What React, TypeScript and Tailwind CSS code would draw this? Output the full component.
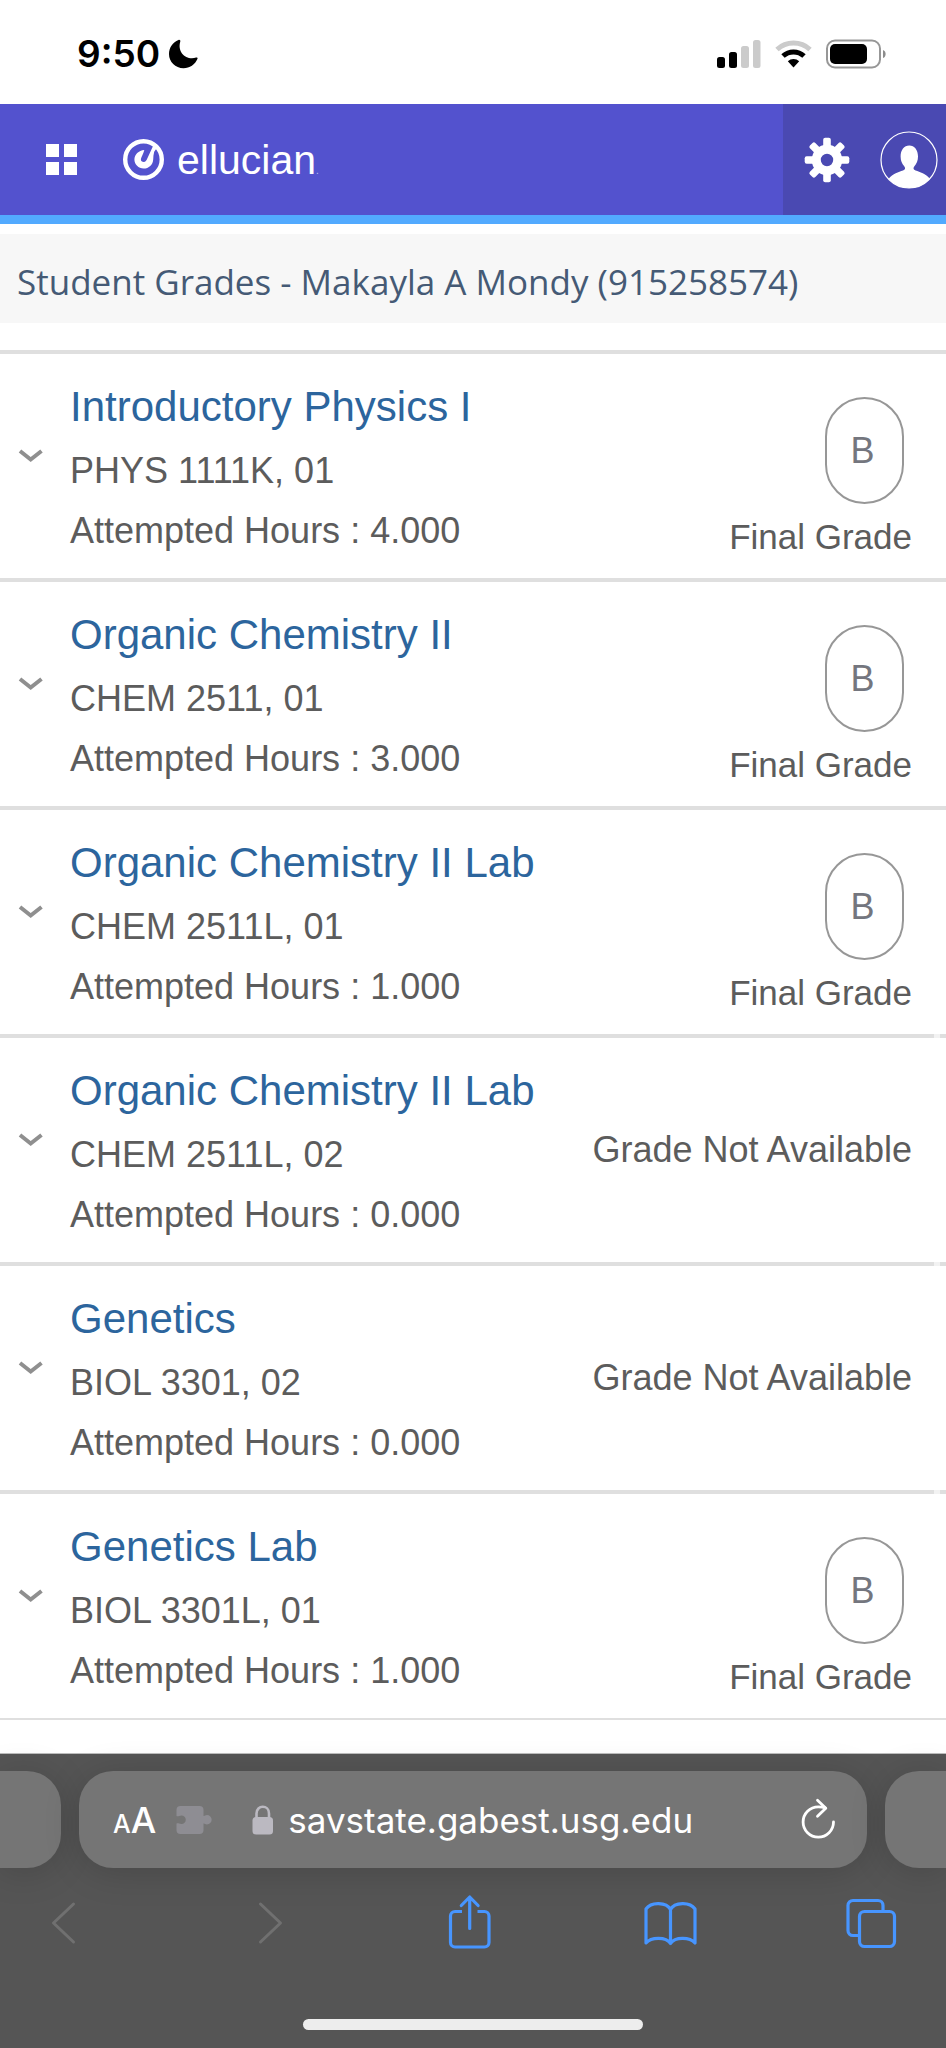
import React, { useState } from 'react';

interface Course {
    id: string;
    title: string;
    section: string;
    hours: string;
    grade?: string;
    notched?: boolean;
}

const courses: Course[] = [
    { id: 'phys-1111k-01', title: 'Introductory Physics I', section: 'PHYS 1111K, 01', hours: '4.000', grade: 'B' },
    { id: 'chem-2511-01', title: 'Organic Chemistry II', section: 'CHEM 2511, 01', hours: '3.000', grade: 'B' },
    { id: 'chem-2511l-01', title: 'Organic Chemistry II Lab', section: 'CHEM 2511L, 01', hours: '1.000', grade: 'B' },
    { id: 'chem-2511l-02', title: 'Organic Chemistry II Lab', section: 'CHEM 2511L, 02', hours: '0.000', notched: true },
    { id: 'biol-3301-02', title: 'Genetics', section: 'BIOL 3301, 02', hours: '0.000', notched: true },
    { id: 'biol-3301l-01', title: 'Genetics Lab', section: 'BIOL 3301L, 01', hours: '1.000', grade: 'B', notched: true },
];

const StatusBar: React.FC = () => (
    <div className="flex h-[104px] items-center justify-between bg-white pl-[77px] pr-[59px] pt-1">
        <div className="flex items-center gap-2">
            <span className="font-['Inter',sans-serif] text-[37px] font-semibold leading-[46px] text-black">9:50</span>
            <svg width="30" height="30" viewBox="0 0 30 30" aria-hidden="true">
                <path d="M10.500 1C4.800 3.200 1 8.600 1 15c0 8 6.400 14.200 14.500 14.200 6.200 0 11.600-3.600 14-9.400.4-1-.4-1.700-1.400-1.300C18.500 21.500 8.900 13.500 12.300 2.400c.3-.9-.6-1.900-1.800-1.400z" />
            </svg>
        </div>
        <div className="flex items-center gap-3">
            <svg width="46" height="30" viewBox="0 0 46 30" aria-hidden="true">
                <rect x="0" y="18" width="8" height="11" rx="2.500" />
                <rect x="12" y="13" width="8" height="16" rx="2.500" />
                <rect x="24" y="7" width="8" height="22" rx="2.500" fill="#cbcbcb" />
                <rect x="36" y="1" width="7.500" height="28" rx="2.500" fill="#cbcbcb" />
            </svg>
            <svg width="38" height="30" viewBox="0 0 38 30" fill="none" aria-hidden="true">
                <path d="M2 10.500a24.500 24.500 0 0 1 33 0" stroke="#cbcbcb" strokeWidth="5" />
                <path d="M8 17a15.500 15.500 0 0 1 21 0" stroke="#000" strokeWidth="5" />
                <path d="M12.800 22.200a8.500 8.500 0 0 1 11.400 0L18.500 28.500z" fill="#000" />
            </svg>
            <svg width="62" height="30" viewBox="0 0 62 30" fill="none" aria-hidden="true">
                <rect x="2" y="1.500" width="53" height="27" rx="8" stroke="#979797" strokeWidth="2" />
                <rect x="5" y="5" width="37" height="20" rx="5" fill="#000" />
                <path d="M58 11c3.500 1.200 3.500 7 0 8z" fill="#8c8c8c" />
            </svg>
        </div>
    </div>
);

const AppHeader: React.FC = () => (
    <header className="flex h-[120px] items-stretch justify-between border-b-[9px] border-[#52aaff] bg-[#5352ce]">
        <div className="flex items-center pl-[46px]">
            <button aria-label="Open menu" className="grid grid-cols-2 gap-[5px]">
                <span className="size-[13px] bg-white" />
                <span className="size-[13px] bg-white" />
                <span className="size-[13px] bg-white" />
                <span className="size-[13px] bg-white" />
            </button>
            <a href="#home" className="ml-[46px] flex items-center gap-3">
                <svg width="42" height="42" viewBox="0 0 42 42" fill="none" aria-hidden="true">
                    <circle cx="20.500" cy="20.500" r="18.300" stroke="#fff" strokeWidth="4.400" />
                    <path d="M21.300 11c-5.700.5-9.900 4.600-9.900 9.600 0 5 4.100 8.900 9.200 8.900 5.300 0 9.300-3.800 9.600-9.100.1-2.700.3-5.200 1-7.600L34.500 8l-3.300-3.500-7.500 16.300c-.6 1.300-1.500 2-2.700 2.100-1.800.1-3.300-.8-3.100-2.400.2-2.200 2.100-4.500 3.400-9.500z" fill="#fff" />
                </svg>
                <span className="text-[41px] leading-[48px] text-white">
                    ellucian<span className="text-[10px] leading-none opacity-60">.</span>
                </span>
            </a>
        </div>
        <div className="flex items-center gap-[30px] bg-[#4a49b2] pl-[21px] pr-2">
            <button aria-label="Settings">
                <svg width="46" height="46" viewBox="-23 -23 46 46" fill="none" aria-hidden="true">
                    <circle r="10.700" stroke="#fff" strokeWidth="9" />
                    <g fill="#fff">
                        {[0, 45, 90, 135, 180, 225, 270, 315].map(angle => (
                            <rect key={angle} x="-3.800" y="-22.300" width="7.600" height="11" rx="2" transform={`rotate(${angle})`} />
                        ))}
                    </g>
                </svg>
            </button>
            <button aria-label="User profile">
                <svg width="58" height="58" viewBox="0 0 58 58" fill="none" aria-hidden="true">
                    <path d="M8.500 48c4.500-5.500 10-7 14.500-8.500 2.500-.8 2.500-2.500 1.200-4.300C22 33 20.600 29.500 20.600 25.500c0-6.500 3.500-11 8.700-11s8.700 4.500 8.700 11c0 4-1.400 7.500-3.600 9.700-1.300 1.800-1.300 3.500 1.200 4.300C40 41 45.500 42.500 50 48a28.300 28.300 0 0 1-41.500 0z" fill="#fff" />
                    <circle cx="29" cy="29" r="28" stroke="#fff" strokeWidth="1.200" />
                </svg>
            </button>
        </div>
    </header>
);

const CourseRow: React.FC<{ course: Course }> = ({ course }) => {
    const [open, setOpen] = useState(false);

    return (
        <li className="relative flex items-start border-t-4 border-[#dfdfdf] pb-[17px] pt-[23px]">
            {course.notched && <span className="absolute -top-1 right-[6px] h-1 w-[6px] bg-[#f2f2f2]" />}
            <button
                onClick={() => setOpen(prev => !prev)}
                aria-expanded={open}
                aria-label={`Details for ${course.section}`}
                className="ml-4 mt-16 h-7 w-[30px] shrink-0"
            >
                <svg width="30" height="28" viewBox="0 0 30 28" fill="none" aria-hidden="true">
                    <path d="M4 10l10.700 8.500L25.500 10" stroke="#8f8f8f" strokeWidth="4" />
                </svg>
            </button>
            <div className="ml-6 flex-1 text-[36px] leading-[60px] text-[#5c5c5c]">
                <h2 className="mb-1 text-[42px]">
                    <a href={`#${course.id}`} className="block text-[#2c659d]">{course.title}</a>
                </h2>
                <p>{course.section}</p>
                <p>Attempted Hours : {course.hours}</p>
            </div>
            <div className="flex shrink-0 flex-col items-end pr-[34px] leading-[48px] text-[#5c5c5c]">
                {course.grade ? (
                    <>
                        <span className="mr-2 mt-5 flex h-[107px] w-[79px] items-center justify-center rounded-full border-2 border-[#979797] pr-1 text-[36px] text-[#74767e]">
                            {course.grade}
                        </span>
                        <span className="mt-[9px] text-[35px]">Final Grade</span>
                    </>
                ) : (
                    <span className="mt-[65px] text-[36px]">Grade Not Available</span>
                )}
            </div>
        </li>
    );
};

const BrowserBar: React.FC = () => (
    <footer className="border-t border-[#bdbdbd] bg-[#555555] pt-[17px] font-['Inter',sans-serif]">
        <div className="flex h-[97px] items-stretch gap-[18px]">
            <div className="w-[61px] rounded-r-[34px] bg-[#757575] shadow-[0_4px_36px_rgba(0,0,0,0.16)]" />
            <div className="flex min-w-0 flex-1 items-center rounded-[34px] bg-[#757575] pl-[34px] pr-[30px] shadow-[0_4px_36px_rgba(0,0,0,0.16)]">
                <button aria-label="Page settings" className="flex items-baseline font-medium text-white">
                    <span className="text-[25px]">A</span>
                    <span className="text-[36px]">A</span>
                </button>
                <svg className="ml-5 shrink-0" width="36" height="30" viewBox="0 0 36 30" aria-hidden="true">
                    <path d="M4.500 1h19a4 4 0 0 1 4 4v6c1.300.2 1.800-.9 3.500-.9a4.600 4.600 0 0 1 0 9.300c-1.700 0-2.200-1.100-3.500-.9V25a4 4 0 0 1-4 4h-19a4 4 0 0 1-4-4v-6.500c1.600-.9 2.400.4 5 .4a4.200 4.200 0 0 0 0-8.500c-2.600 0-3.400 1.400-5 .5V5a4 4 0 0 1 4-4z" fill="#8e8d93" />
                </svg>
                <svg className="ml-10 shrink-0" width="22" height="30" viewBox="0 0 22 30" fill="none" aria-hidden="true">
                    <rect x=".5" y="12" width="20.500" height="17.500" rx="3.500" fill="#bbb9c1" />
                    <path d="M4.500 13V8.500c0-9 12.500-9 12.500 0V13" stroke="#bbb9c1" strokeWidth="2.600" />
                </svg>
                <input
                    aria-label="Address"
                    defaultValue="savstate.gabest.usg.edu"
                    className="ml-[14px] min-w-0 flex-1 bg-transparent text-[35px] leading-[48px] text-white outline-none"
                />
                <button aria-label="Reload" className="shrink-0">
                    <svg width="36" height="44" viewBox="0 0 36 44" fill="none" stroke="#fff" strokeWidth="2.800" strokeLinecap="round" strokeLinejoin="round" aria-hidden="true">
                        <path d="M32.500 24A15.200 15.200 0 1 1 17.300 8.800c2.500 0 4.800.3 7 1" />
                        <path d="M16.500 2.200l8.300 8-8.300 8" />
                    </svg>
                </button>
            </div>
            <div className="w-[61px] rounded-l-[34px] bg-[#757575] shadow-[0_4px_36px_rgba(0,0,0,0.16)]" />
        </div>
        <nav className="mt-[26px] flex justify-between pl-[38px] pr-[47px]">
            <button aria-label="Back" disabled>
                <svg width="56" height="56" viewBox="0 0 56 56" fill="none" stroke="#707070" strokeWidth="3" strokeLinecap="round" strokeLinejoin="round">
                    <path d="M35.500 10L15.500 29l20 19" />
                </svg>
            </button>
            <button aria-label="Forward" disabled>
                <svg width="56" height="56" viewBox="0 0 56 56" fill="none" stroke="#707070" strokeWidth="3" strokeLinecap="round" strokeLinejoin="round">
                    <path d="M21.500 10l20 19-20 19" />
                </svg>
            </button>
            <button aria-label="Share">
                <svg width="56" height="56" viewBox="0 0 56 56" fill="none" stroke="#4795ff" strokeWidth="3.200" strokeLinecap="round" strokeLinejoin="round">
                    <path d="M21 17.500h-7a4.500 4.500 0 0 0-4.500 4.500v26.500A4.500 4.500 0 0 0 14 53h29.500a4.500 4.500 0 0 0 4.500-4.500V22a4.500 4.500 0 0 0-4.500-4.500h-7" strokeLinecap="butt" />
                    <path d="M28.700 34.500V3.500M20.300 11.500l8.400-8.500 8.400 8.500" />
                </svg>
            </button>
            <button aria-label="Bookmarks">
                <svg width="56" height="56" viewBox="0 0 56 56" fill="none" stroke="#4795ff" strokeWidth="3.200" strokeLinecap="round" strokeLinejoin="round">
                    <path d="M28.500 15.500C24.500 8 9 7.500 4 15v34c5-6 20-6.500 24.500.5 4.500-7 19.500-6.500 24.500-.5V15c-5-7.500-20.500-7-24.500.5zM28.500 15.500v34" />
                </svg>
            </button>
            <button aria-label="Tabs">
                <svg width="56" height="56" viewBox="0 0 56 56" fill="none" stroke="#4795ff" strokeWidth="3.200">
                    <rect x="16.500" y="17.500" width="35" height="35" rx="5" />
                    <path d="M16.500 41.500H10a5 5 0 0 1-5-5v-25a5 5 0 0 1 5-5h25a5 5 0 0 1 5 5v6" />
                </svg>
            </button>
        </nav>
        <div className="mx-auto mb-[18px] mt-[69px] h-[11px] w-[340px] rounded-full bg-[#ededed]" />
    </footer>
);

const App: React.FC = () => {
    return (
        <div className="flex min-h-screen flex-col bg-white font-['Liberation_Sans',Arial,sans-serif]">
            <StatusBar />
            <AppHeader />
            <main className="flex-1 pb-8">
                <h1 className="mb-[27px] mt-[10px] bg-[#f7f7f7] px-[17px] pb-[17px] pt-[23px] font-['Open_Sans','Noto_Sans',sans-serif] text-[35px] leading-[49px] text-[#455a75]">
                    Student Grades - Makayla A Mondy (915258574)
                </h1>
                <ul className="border-b-2 border-[#dfdfdf]">
                    {courses.map(course => (
                        <CourseRow key={course.id} course={course} />
                    ))}
                </ul>
            </main>
            <BrowserBar />
        </div>
    );
};

export default App;
